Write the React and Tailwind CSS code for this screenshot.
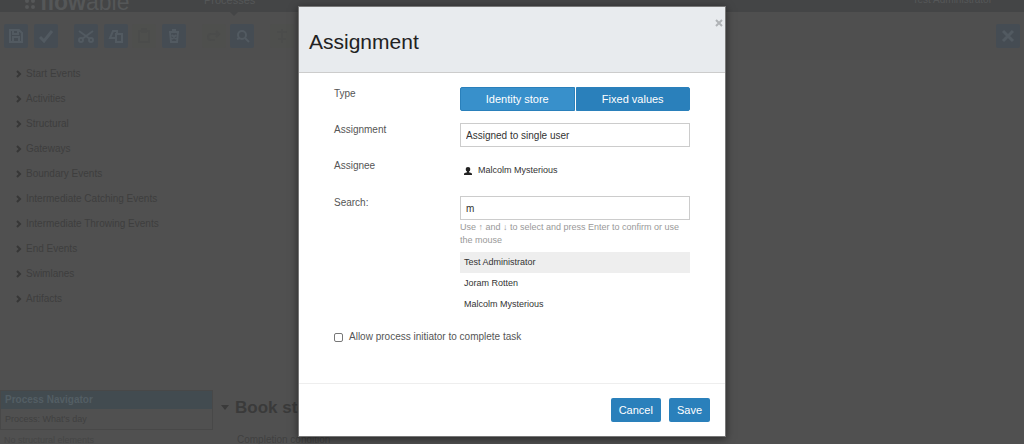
import { useState } from "react";

const groups = [
  "Start Events",
  "Activities",
  "Structural",
  "Gateways",
  "Boundary Events",
  "Intermediate Catching Events",
  "Intermediate Throwing Events",
  "End Events",
  "Swimlanes",
  "Artifacts",
];

const people = ["Test Administrator", "Joram Rotten", "Malcolm Mysterious"];

function Tool({ label, className = "", faint = false, children }) {
  return (
    <button
      type="button"
      aria-label={label}
      className={`flex size-6 shrink-0 items-center justify-center rounded-xs ${
        faint ? "bg-[#4e4f4d] text-[#4b4c4b]" : "bg-[#454c53] text-[#525a61]"
      } ${className}`}
    >
      <svg viewBox="0 0 16 16" className="size-4" fill="none" stroke="currentColor" strokeWidth="2">
        {children}
      </svg>
    </button>
  );
}

function Editor() {
  return (
    <div className="flex min-h-screen flex-col bg-[#505050]">
      <header className="flex h-3 items-end bg-[#444546] text-[#555758]">
        <div className="ml-6 flex w-[180px] items-end gap-1 pb-0.5 text-[23px] leading-4">
          <svg viewBox="0 0 12 12" className="size-3" fill="currentColor">
            <circle cx="3" cy="3" r="2" />
            <circle cx="9" cy="3" r="2" />
            <circle cx="3" cy="9" r="2" />
            <circle cx="9" cy="9" r="2" />
          </svg>
          <span>
            <b>flow</b>able
          </span>
        </div>
        <a href="#processes" className="relative pb-1 text-[11px] leading-4">
          Processes
          <svg viewBox="0 0 8 4" className="absolute top-full left-1/2 h-1 w-2 text-[#444546]" fill="currentColor">
            <path d="M0 0h8L4 4z" />
          </svg>
        </a>
        <span className="mr-8 ml-auto pb-1 text-[10px] leading-4">Test Administrator</span>
      </header>
      <div className="flex h-12 items-center bg-[#4f4f4f] px-1">
        <Tool label="Save the model">
          <path d="M2 2h9l3 3v9H2zM5 2v4h5V2M5 14V9h6v5" />
        </Tool>
        <Tool label="Validate the model" className="ml-1.5">
          <path d="M2 9l4 4 8-10" strokeWidth="3" />
        </Tool>
        <Tool label="Cut" className="ml-4">
          <path d="M1 3l11 8M15 3L4 11" />
          <circle cx="3" cy="12" r="2" />
          <circle cx="13" cy="12" r="2" />
        </Tool>
        <Tool label="Copy" className="ml-1.5">
          <path d="M8 6h6v8H8zM8 10H2l3-7h4v3" />
        </Tool>
        <Tool label="Paste" faint className="ml-1">
          <path d="M3 3h10v11H3zM6 1h4v3H6z" />
        </Tool>
        <Tool label="Delete" className="ml-1.5">
          <path d="M3 4h10M4 4l1 10h6l1-10M6 2h4M6 7l4 4M10 7l-4 4" />
        </Tool>
        <Tool label="Redo" faint className="ml-4">
          <path d="M13 6H5a3 3 0 000 6h4M10 3l3 3-3 3" />
        </Tool>
        <Tool label="Zoom" className="ml-1">
          <circle cx="8" cy="7" r="4" />
          <path d="M11 10l4 4M3 11l3-1" />
        </Tool>
        <Tool label="Align" faint className="ml-4">
          <path d="M8 1v14M3 4h10M4 11h8" />
        </Tool>
        <Tool label="Close the editor" className="ml-auto">
          <path d="M3 3l10 10M13 3L3 13" strokeWidth="3" />
        </Tool>
      </div>
      <div className="flex grow">
        <aside className="flex w-[213px] shrink-0 flex-col">
          <ul className="grow pt-px pl-4 text-[10px] leading-[25px] text-[#3e3e3e]">
            {groups.map((name) => (
              <li key={name} className="flex items-center gap-1">
                <svg viewBox="0 0 6 8" className="h-2 w-1.5" fill="none" stroke="#373737" strokeWidth="2">
                  <path d="M1 1l3 3-3 3" />
                </svg>
                {name}
              </li>
            ))}
          </ul>
          <section className="border border-[#484848]">
            <h2 className="bg-[#424b50] px-1 text-[10px] leading-[18px] font-bold text-[#535e64]">Process Navigator</h2>
            <p className="px-1 text-[9px] leading-5 text-[#404040]">Process: What's day</p>
          </section>
          <p className="h-3.5 overflow-hidden px-1 text-[9px] leading-5 text-[#454545]">No structural elements</p>
        </aside>
        <main className="flex grow flex-col justify-end pl-2 text-[#3a3a3a]">
          <h1 className="flex items-center gap-1.5 text-[17px] leading-5 font-bold">
            <svg viewBox="0 0 8 6" className="h-1.5 w-2" fill="currentColor">
              <path d="M0 0h8L4 5z" />
            </svg>
            Book store
          </h1>
          <p className="mt-4 h-2.5 overflow-hidden pl-4 text-[10px] leading-3 text-[#404040]">Completion condition</p>
        </main>
      </div>
    </div>
  );
}

function AssignmentDialog() {
  const [source, setSource] = useState("identity");
  const [query, setQuery] = useState("m");
  const tab = "h-6 border border-[#2a80bb] text-[11px] text-white";
  const field =
    "h-6 w-full appearance-none border border-[#cccccc] bg-white px-[5px] text-[10px] text-[#333333] outline-none";
  const action = "h-6 rounded-xs bg-[#2a80bb] px-2 text-[11px] text-white";

  return (
    <div
      role="dialog"
      aria-modal="true"
      aria-labelledby="dialog-title"
      className="w-[428px] max-w-full border border-[#777777] bg-white shadow-[0_2px_8px_rgba(0,0,0,0.5)]"
    >
      <header className="flex justify-between border-b border-[#cccccc] bg-[#e8ebee] pr-0.5 pl-2.5">
        <h2 id="dialog-title" className="pt-5 pb-[15px] text-[21px] leading-[30px] text-[#222222]">
          Assignment
        </h2>
        <button type="button" aria-label="Close" className="mt-3 flex size-2 self-start text-[#b0b3b6]">
          <svg viewBox="0 0 8 8" className="size-2" fill="none" stroke="currentColor" strokeWidth="2">
            <path d="M1 1l6 6M7 1L1 7" />
          </svg>
        </button>
      </header>

      <form onSubmit={(e) => e.preventDefault()}>
        <div className="px-[35px] pt-3.5 pb-[38px] text-[10px] text-[#555555]">
          <div className="grid grid-cols-[126px_1fr]">
            <span id="type-label" className="leading-[14px]">Type</span>
            <div role="group" aria-labelledby="type-label" className="grid grid-cols-2 gap-px">
              <button
                type="button"
                aria-pressed={source === "identity"}
                onClick={() => setSource("identity")}
                className={`${tab} rounded-l-xs ${source === "identity" ? "bg-[#3890cb]" : "bg-[#2a80bb]"}`}
              >
                Identity store
              </button>
              <button
                type="button"
                aria-pressed={source === "fixed"}
                onClick={() => setSource("fixed")}
                className={`${tab} rounded-r-xs ${source === "fixed" ? "bg-[#3890cb]" : "bg-[#2a80bb]"}`}
              >
                Fixed values
              </button>
            </div>
          </div>

          <div className="mt-3 grid grid-cols-[126px_1fr]">
            <label htmlFor="assignment" className="leading-[14px]">Assignment</label>
            <select id="assignment" className={field}>
              <option>Assigned to single user</option>
            </select>
          </div>

          <div className="mt-3 grid grid-cols-[126px_1fr]">
            <span className="leading-[14px]">Assignee</span>
            <div className="flex h-6 items-center gap-1.5 pl-1 text-[9px] text-[#333333]">
              <svg viewBox="0 0 16 16" className="size-2" fill="#222222">
                <path d="M8 0C5 0 3.500 1.800 3.500 4.500c0 2 1 3.900 2.500 4.700v1.300L1.500 12.200C.4 12.700 0 13.400 0 15v1h16v-1c0-1.600-.4-2.300-1.500-2.800L10 10.500V9.200c1.500-.8 2.500-2.700 2.500-4.700C12.500 1.800 11 0 8 0z" />
              </svg>
              Malcolm Mysterious
            </div>
          </div>

          <div className="mt-[13px] grid grid-cols-[126px_1fr]">
            <label htmlFor="search" className="leading-[14px]">Search:</label>
            <div>
              <input
                id="search"
                type="text"
                value={query}
                onChange={(e) => setQuery(e.target.value)}
                className={field}
              />
              <p className="mt-px text-[9px] leading-[13px] text-[#999999]">
                Use ↑ and ↓ to select and press Enter to confirm or use the mouse
              </p>
              <ul className="mt-[5px] text-[9px] text-[#333333]">
                {people.map((name, i) => (
                  <li key={name} className={i === 0 ? "bg-[#eeeeee]" : ""}>
                    <button type="button" className="block h-[21px] w-full px-1 text-left">{name}</button>
                  </li>
                ))}
              </ul>
            </div>
          </div>

          <label className="mt-3.5 flex items-center gap-1.5 leading-4">
            <input
              type="checkbox"
              className="size-[9px] appearance-none rounded-xs border border-[#777777] bg-white checked:bg-[#2a80bb]"
            />
            Allow process initiator to complete task
          </label>
        </div>

        <footer className="flex justify-end gap-2 border-t border-[#eeeeee] px-[15px] py-3.5">
          <button type="button" className={action}>Cancel</button>
          <button type="submit" className={action}>Save</button>
        </footer>
      </form>
    </div>
  );
}

export default function App() {
  return (
    <div className="relative min-h-screen overflow-hidden font-['Liberation_Sans',Arial,sans-serif]">
      <Editor />
      <div className="absolute inset-0 flex items-start justify-center pt-1.5">
        <AssignmentDialog />
      </div>
    </div>
  );
}
